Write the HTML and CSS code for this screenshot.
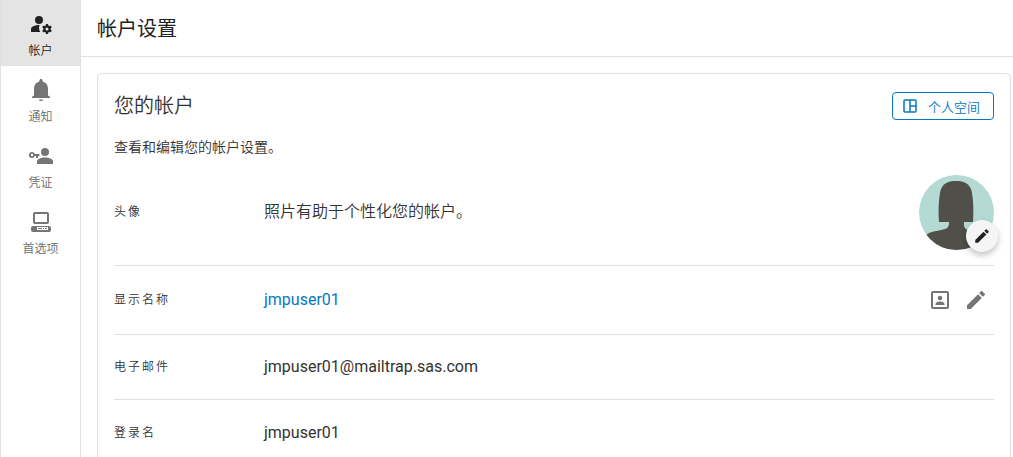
FILE: index.html
```html
<!DOCTYPE html>
<html lang="zh-CN">
<head>
    <meta charset="UTF-8">
    <meta name="viewport" content="width=device-width, initial-scale=1.0">
    <title>帐户设置</title>
    <link rel="stylesheet" href="styles.css">
</head>

<body>
    <div class="wrapper">
        <nav class="sidebar">
            <a href="#" class="nav-item active">
                <svg class="icon" viewBox="0 0 24 24">
                    <circle cx="10" cy="8" r="4" />
                    <path d="M10.67 13.02C10.45 13.01 10.23 13 10 13c-2.42 0-4.68.67-6.61 1.82C2.51 15.34 2 16.32 2 17.35V20h9.26A6.96 6.96 0 0 1 10 16c0-1.07.25-2.07.67-2.98z" />
                    <path fill-rule="evenodd" d="M21.750 17c0-.22-.03-.42-.06-.63l1.140-1.010-1-1.730-1.450.49c-.32-.27-.68-.48-1.080-.63L19 12h-2l-.3 1.490c-.4.15-.76.36-1.080.63l-1.450-.49-1 1.730 1.140 1.010c-.03.21-.06.41-.06.63s.03.42.06.63l-1.140 1.010 1 1.730 1.450-.49c.32.27.68.48 1.080.63L17 22h2l.3-1.490c.4-.15.76-.36 1.080-.63l1.450.49 1-1.730-1.140-1.010c.03-.21.06-.41.06-.63zM18 18.500a1.500 1.500 0 1 1 0-3 1.500 1.500 0 0 1 0 3z" />
                </svg>
                <span>帐户</span>
            </a>
            <a href="#" class="nav-item">
                <svg class="icon" viewBox="0 0 24 24">
                    <path d="M10 21.500h4c0 1.100-.9 1.500-2 1.500s-2-.4-2-1.500zM19 17.500V10.500c0-3.500-1.900-6.300-5.400-7.100V2.600c0-.9-.7-1.600-1.600-1.600s-1.600.7-1.600 1.600v.8C6.900 4.200 5 7 5 10.500v7l-2 1.300V20h18v-1.200z" />
                </svg>
                <span>通知</span>
            </a>
            <a href="#" class="nav-item">
                <svg class="icon wide" viewBox="0 0 26 24">
                    <circle cx="17" cy="8" r="4" />
                    <path d="M9 20v-2.500C9 14.800 13.500 13.500 17 13.500s8 1.300 8 4V20z" />
                    <path fill-rule="evenodd" d="M4 8a3 3 0 1 0 2.830 4H8v2h2v-2h1.500v-2H6.830A3 3 0 0 0 4 8zm0 1.800a1.200 1.200 0 1 1 0 2.400 1.200 1.200 0 0 1 0-2.400z" />
                </svg>
                <span>凭证</span>
            </a>
            <a href="#" class="nav-item">
                <svg class="icon" viewBox="0 0 24 24">
                    <path fill-rule="evenodd" d="M6 2h12a2 2 0 0 1 2 2v8a2 2 0 0 1-2 2H6a2 2 0 0 1-2-2V4a2 2 0 0 1 2-2zm0 2v8h12V4zM4 16h16a2 2 0 0 1 2 2v2a2 2 0 0 1-2 2H4a2 2 0 0 1-2-2v-2a2 2 0 0 1 2-2zM8 17v3h11v-3zm1 1h4v1H9zm5 0h1v1h-1zm2 0h2v1h-2z" />
                </svg>
                <span>首选项</span>
            </a>
        </nav>

        <main class="main">
            <header class="header">
                <h1>帐户设置</h1>
            </header>
            <section class="card">
                <div class="card-head">
                    <h2>您的帐户</h2>
                    <button type="button" class="space-btn">
                        <svg viewBox="0 0 16 16">
                            <path fill="none" stroke="currentColor" stroke-width="1.500" d="M3 2h10a1 1 0 0 1 1 1v10a1 1 0 0 1-1 1H3a1 1 0 0 1-1-1V3a1 1 0 0 1 1-1zM8 2v12M8 8h6" />
                        </svg>
                        <span>个人空间</span>
                    </button>
                </div>
                <p class="intro">查看和编辑您的帐户设置。</p>

                <dl class="settings">
                    <div class="row avatar-row">
                        <dt>头像</dt>
                        <dd class="hint">照片有助于个性化您的帐户。</dd>
                        <dd class="avatar">
                            <svg class="avatar-img" viewBox="0 0 75 75">
                                <clipPath id="circle"><circle cx="37.5" cy="37.5" r="37.5" /></clipPath>
                                <g clip-path="url(#circle)">
                                    <path fill="#b5dad3" d="M0 0h75v75H0z" />
                                    <path fill="#504f49" d="M20 47C19 34 20 20 22 14 25 7 31 6 37 6s12 1 15 8c2 6 3 20 2 33H45v4c1 4 6 5 10 6 7 2 12 4 12 8v10H7V60c5-5 20-4 22-8 1-2 1-3 1-5z" />
                                </g>
                            </svg>
                            <button type="button" class="avatar-edit" aria-label="编辑头像">
                                <svg viewBox="0 0 24 24">
                                    <path d="M3 17.250V21h3.750L17.810 9.940l-3.750-3.750zM20.710 7.040a1 1 0 0 0 0-1.410l-2.340-2.340a1 1 0 0 0-1.410 0l-1.830 1.830 3.750 3.750z" />
                                </svg>
                            </button>
                        </dd>
                    </div>
                    <div class="row name-row">
                        <dt>显示名称</dt>
                        <dd><a href="#">jmpuser01</a></dd>
                        <dd class="actions">
                            <button type="button" aria-label="查看个人资料">
                                <svg viewBox="0 0 24 24">
                                    <path fill-rule="evenodd" d="M5 3h14a2 2 0 0 1 2 2v14a2 2 0 0 1-2 2H5a2 2 0 0 1-2-2V5a2 2 0 0 1 2-2zm0 2v14h14V5z" />
                                    <circle cx="12" cy="10" r="2.250" />
                                    <path d="M7.500 17v-1c0-1.700 3-2.500 4.500-2.500s4.500.8 4.500 2.500v1z" />
                                </svg>
                            </button>
                            <button type="button" aria-label="编辑显示名称">
                                <svg viewBox="0 0 24 24">
                                    <path d="M3 17.250V21h3.750L17.810 9.940l-3.750-3.750zM20.710 7.040a1 1 0 0 0 0-1.410l-2.340-2.340a1 1 0 0 0-1.410 0l-1.830 1.830 3.750 3.750z" />
                                </svg>
                            </button>
                        </dd>
                    </div>
                    <div class="row">
                        <dt>电子邮件</dt>
                        <dd>jmpuser01@mailtrap.sas.com</dd>
                    </div>
                    <div class="row">
                        <dt>登录名</dt>
                        <dd>jmpuser01</dd>
                    </div>
                </dl>
            </section>
        </main>
    </div>
</body>
</html>
```
FILE: styles.css
```css
* {
    padding: 0;
    margin: 0;
    box-sizing: border-box;
}

body {
    background-color: #ffffff;
    color: #333333;
    font-family: Roboto, "Noto Sans CJK SC", sans-serif;
    font-size: 16px;
    line-height: 24px;
}

button {
    font-family: inherit;
    background: none;
    border: none;
    color: inherit;
    cursor: pointer;
}

a {
    text-decoration: none;
}

svg {
    display: block;
    fill: currentColor;
}

.wrapper {
    display: flex;
    height: 100vh;
    overflow: hidden;
}

/* left navigation */
.sidebar {
    flex: none;
    width: 81px;
    border-left: 1px solid #e0e0e0;
    border-right: 1px solid #e0e0e0;
}

.nav-item {
    display: flex;
    flex-direction: column;
    align-items: center;
    gap: 4px;
    height: 66px;
    padding-top: 12px;
    color: #6a6a6a;
    font-size: 12px;
    font-weight: 350;
    line-height: 22px;
}

.nav-item.active {
    background-color: #e4e4e4;
    color: #212121;
}

.icon {
    width: 24px;
    height: 24px;
    fill: #757575;
}

.active .icon {
    fill: #212121;
}

.icon.wide {
    width: 26px;
}

/* page content */
.main {
    flex: 1;
    min-width: 0;
}

.header {
    display: flex;
    align-items: center;
    height: 57px;
    padding: 2px 16px 0;
    border-bottom: 1px solid #e0e0e0;
}

.header h1 {
    color: #212121;
    font-size: 20px;
    font-weight: 400;
}

.card {
    margin: 16px 2px 16px 16px;
    padding: 16px;
    border: 1px solid #e0e0e0;
    border-radius: 4px;
}

.card-head {
    display: flex;
    align-items: center;
    justify-content: space-between;
    height: 32px;
}

.card-head h2 {
    font-size: 20px;
    font-weight: 350;
    line-height: 32px;
}

.space-btn {
    display: flex;
    align-items: center;
    gap: 10px;
    height: 28px;
    padding: 0 13px 0 9px;
    border: 1px solid #0378be;
    border-radius: 4px;
    color: #0378be;
    font-size: 13px;
    font-weight: 350;
}

.space-btn svg {
    width: 16px;
    height: 16px;
}

.intro {
    padding-top: 13px;
    font-size: 14px;
    font-weight: 350;
}

.row {
    display: flex;
    align-items: center;
    height: 65px;
    border-bottom: 1px solid #e0e0e0;
}

.row:last-child {
    border-bottom: none;
}

.row dt {
    flex: none;
    width: 150px;
    font-size: 12px;
    font-weight: 350;
    letter-spacing: 2px;
}

.row dd {
    flex: 1;
}

.row .hint {
    font-weight: 350;
}

.row dd a {
    color: #0378be;
}

.avatar-row {
    height: 107px;
}

.name-row {
    height: 69px;
}

.row .avatar {
    position: relative;
    flex: none;
}

.avatar-img {
    width: 75px;
    height: 75px;
}

.avatar-edit {
    position: absolute;
    right: -4px;
    bottom: -2px;
    display: flex;
    align-items: center;
    justify-content: center;
    width: 32px;
    height: 32px;
    border-radius: 50%;
    background-color: #f5f5f5;
    box-shadow: 0 3px 6px rgba(0, 0, 0, 0.25);
    color: #212121;
}

.avatar-edit svg {
    width: 18px;
    height: 18px;
}

.row .actions {
    display: flex;
    flex: none;
    gap: 12px;
    padding-right: 6px;
    color: #757575;
}

.actions svg {
    width: 24px;
    height: 24px;
}
```
